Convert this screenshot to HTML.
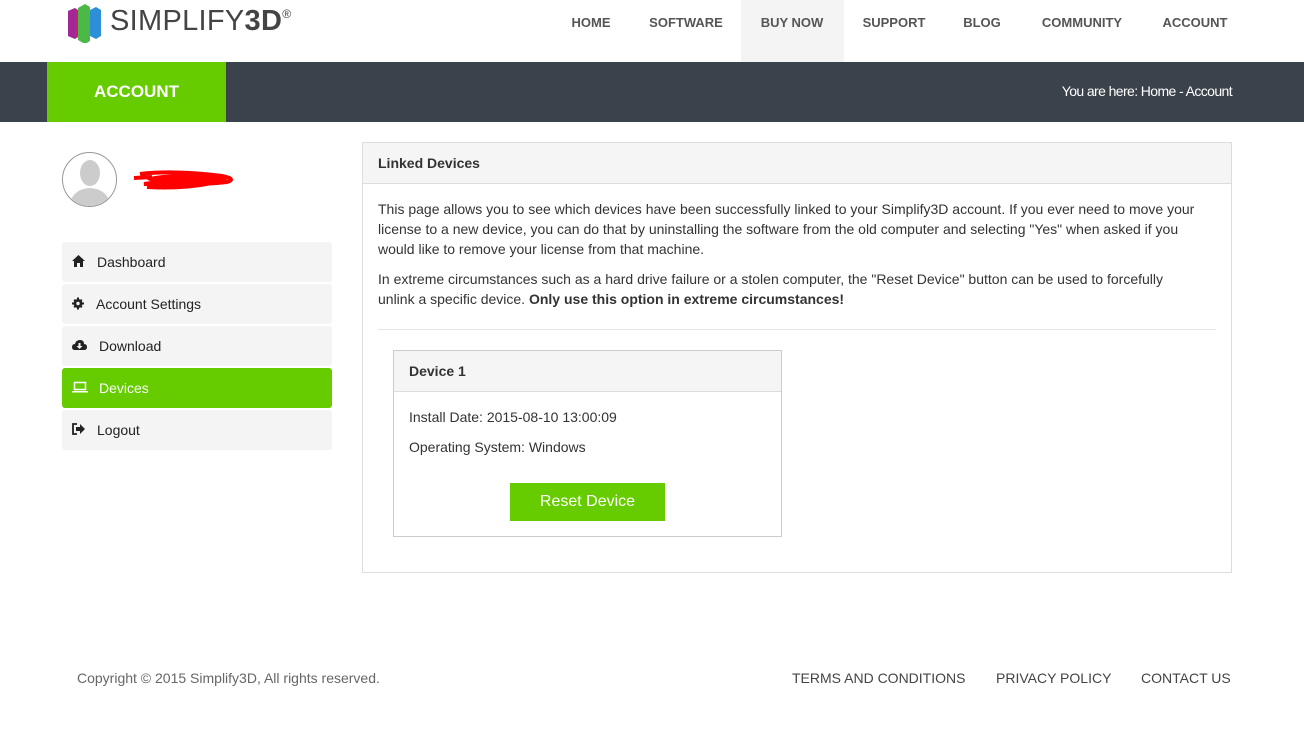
<!DOCTYPE html>
<html><head><meta charset="utf-8"><style>
*{margin:0;padding:0;box-sizing:border-box}
body{width:1304px;height:742px;background:#fff;font-family:"Liberation Sans",Arial,sans-serif;color:#333;position:relative;overflow:hidden}
.abs{position:absolute}
.nav a{position:absolute;top:0;height:62px;line-height:45px;font-size:13px;font-weight:bold;color:#555;text-decoration:none;text-align:center;transform:translateX(-50%);white-space:nowrap}
.bar{top:62px;left:0;width:1304px;height:60px;background:#3a424b}
.side{position:absolute;left:62px;width:270px;height:40px;background:#f4f4f4;border-radius:3px;font-size:14px;color:#222;line-height:40px}
.side svg{position:absolute;left:10px;top:13px}
.side span{position:absolute;left:35px}
p.t{font-size:14px;line-height:20px;color:#333}
</style></head><body>
<svg class="abs" style="left:66px;top:3px" width="40" height="40" viewBox="0 0 40 40">
<path d="M2 8 L9 5 L12 7 L12 34 L9 36 L2 33Z" fill="#c2207a"/>
<path d="M12 5 L19 1 L24 4 L24 38 L19 41 L12 37Z" fill="#4cb848"/>
<path d="M24 7 L30 4 L35 7 L35 33 L30 36 L24 33Z" fill="#2d8fd8"/>
<path d="M2 8 L9 5 L9 36 L2 33Z" fill="#8b2fa8" opacity=".6"/>
</svg>
<div class="abs" style="left:110px;top:4px;font-size:29px;color:#444;letter-spacing:0.3px;line-height:34px">SIMPLIFY<b style="color:#444">3D</b><sup style="font-size:12px;vertical-align:top;line-height:20px">®</sup></div>
<div class="abs" style="left:741px;top:0;width:103px;height:62px;background:#f4f4f4"></div>
<div class="nav">
<a style="left:591px">HOME</a><a style="left:686px">SOFTWARE</a><a style="left:792px">BUY NOW</a><a style="left:894px">SUPPORT</a><a style="left:982px">BLOG</a><a style="left:1082px">COMMUNITY</a><a style="left:1195px">ACCOUNT</a>
</div>
<div class="abs bar"></div>
<div class="abs" style="left:47px;top:62px;width:179px;height:60px;background:#66cc00;color:#fff;font-weight:bold;font-size:17px;text-align:center;line-height:60px">ACCOUNT</div>
<div class="abs" style="right:72px;top:83px;color:#fff;font-size:14px;letter-spacing:-0.6px">You are here: Home - Account</div>
<div class="abs" style="left:62px;top:152px;width:55px;height:55px;border-radius:50%;border:1px solid #999;background:#fff;overflow:hidden">
<svg width="55" height="55" viewBox="0 0 55 55"><ellipse cx="27" cy="20" rx="10" ry="13" fill="#ccc"/><path d="M6 55 Q8 36 27 35 Q46 36 48 55Z" fill="#ccc"/></svg>
</div>
<svg class="abs" style="left:132px;top:168px" width="105" height="24"><path d="M2 10 L20 9 M8 6 Q40 2 90 8 Q105 11 95 14 Q60 18 12 16 Q40 12 88 10 M15 19 Q50 21 80 15" stroke="#f00" stroke-width="4" fill="none"/><ellipse cx="55" cy="11" rx="40" ry="5" fill="#f00"/></svg>
<div class="side" style="top:242px"><svg width="13" height="12" viewBox="0 0 13 12"><path d="M6.5 0 L13 6 L11 6 L11 12 L8 12 L8 8 L5 8 L5 12 L2 12 L2 6 L0 6Z" fill="#222"/></svg><span>Dashboard</span></div>
<div class="side" style="top:284px"><svg width="12" height="13" viewBox="0 0 12 12"><circle cx="6" cy="6" r="4.5" fill="#222"/><path d="M5 0h2v12H5zM0 5h12v2H0z" fill="#222"/><path d="M1.5 2.9L2.9 1.5 10.5 9.1 9.1 10.5zM9.1 1.5L10.5 2.9 2.9 10.5 1.5 9.1z" fill="#222"/><circle cx="6" cy="6" r="1.7" fill="#f4f4f4"/></svg><span style="left:34px">Account Settings</span></div>
<div class="side" style="top:326px"><svg width="15" height="12" viewBox="0 0 15 12"><path d="M3 11 Q0 11 0 8 Q0 5 3 5 Q4 1 8 1 Q12 1 12 5 Q15 5 15 8 Q15 11 12 11Z" fill="#222"/><path d="M6.5 4h2v3h2l-3 3-3-3h2z" fill="#f4f4f4"/></svg><span style="left:37px">Download</span></div>
<div class="side" style="top:368px;background:#66cc00;color:#fff"><svg width="16" height="12" viewBox="0 0 16 12"><rect x="2.5" y="1.5" width="11" height="7" fill="none" stroke="#fff" stroke-width="1.5"/><rect x="0" y="10" width="16" height="1.5" fill="#fff"/></svg><span style="left:37px">Devices</span></div>
<div class="side" style="top:410px"><svg width="13" height="12" viewBox="0 0 13 12"><path d="M5 1H1v10h4" fill="none" stroke="#222" stroke-width="1.8"/><path d="M4 4h4V1l5 5-5 5V8H4z" fill="#222"/></svg><span>Logout</span></div>
<div class="abs" style="left:362px;top:142px;width:870px;height:431px;border:1px solid #ddd">
<div style="height:41px;background:#f5f5f5;border-bottom:1px solid #ddd;font-weight:bold;font-size:14px;line-height:40px;padding-left:15px;color:#333">Linked Devices</div>
<div style="padding:15px 15px 0 15px">
<p class="t">This page allows you to see which devices have been successfully linked to your Simplify3D account. If you ever need to move your license to a new device, you can do that by uninstalling the software from the old computer and selecting "Yes" when asked if you would like to remove your license from that machine.</p>
<p class="t" style="margin-top:10px;padding-right:30px">In extreme circumstances such as a hard drive failure or a stolen computer, the "Reset Device" button can be used to forcefully unlink a specific device. <b>Only use this option in extreme circumstances!</b></p>
<div style="margin-top:20px;border-top:1px solid #e5e5e5"></div>
</div>
<div class="abs" style="left:30px;top:207px;width:389px;height:187px;border:1px solid #ccc">
<div style="height:41px;background:#f5f5f5;border-bottom:1px solid #ddd;font-weight:bold;font-size:14px;line-height:40px;padding-left:15px">Device 1</div>
<p class="t" style="position:absolute;left:15px;top:56px">Install Date: 2015-08-10 13:00:09</p>
<p class="t" style="position:absolute;left:15px;top:86px">Operating System: Windows</p>
<div class="abs" style="left:116px;top:132px;width:155px;height:38px;background:#66cc00;color:#fff;font-size:16px;text-align:center;line-height:38px">Reset Device</div>
</div>
</div>
<div class="abs" style="left:77px;top:670px;font-size:14px;color:#666">Copyright © 2015 Simplify3D, All rights reserved.</div>
<div class="abs" style="left:792px;top:670px;font-size:14px;color:#444">TERMS AND CONDITIONS</div>
<div class="abs" style="left:996px;top:670px;font-size:14px;color:#444">PRIVACY POLICY</div>
<div class="abs" style="left:1141px;top:670px;font-size:14px;color:#444">CONTACT US</div>
</body></html>
